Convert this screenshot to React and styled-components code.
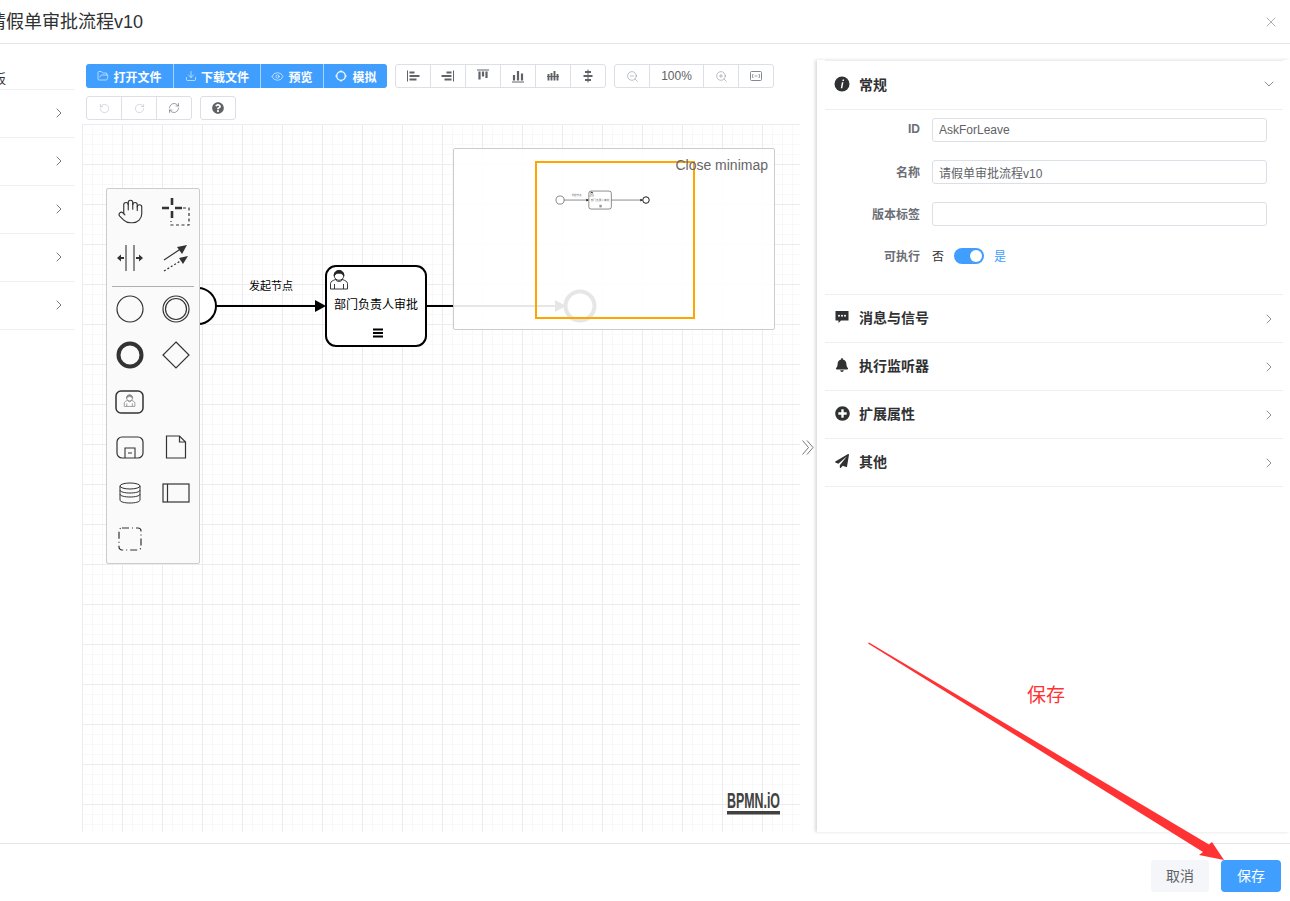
import React from 'react'
import styled, { createGlobalStyle } from 'styled-components'
import {
  X, ChevronRight, ChevronDown, FolderOpen, Download, Eye,
  RotateCcw, RotateCw, RefreshCw, ZoomIn, ZoomOut, Hand,
} from 'lucide-react'
import { FaBell, FaPlusCircle, FaPaperPlane, FaQuestionCircle } from 'react-icons/fa'

const GlobalStyle = createGlobalStyle`
  html, body {
    margin: 0;
    width: 1290px;
    height: 901px;
    overflow: hidden;
    background: #fff;
    font-family: "Liberation Sans", "Noto Sans CJK SC", sans-serif;
  }
  * { box-sizing: border-box; }
`

const Page = styled.div`
  position: relative;
  width: 1290px;
  height: 901px;
  overflow: hidden;
`
const Header = styled.header`
  height: 44px;
  display: flex;
  align-items: center;
  justify-content: space-between;
  padding-right: 11px;
  border-bottom: 1px solid #e4e4e9;
`
const Title = styled.h1`
  margin: 0 0 4px -12px;
  font-size: 18px;
  font-weight: 400;
  color: #303133;
`
const CloseIcon = styled(X)`
  color: #909399;
`
const Body = styled.div`
  height: 799px;
  display: flex;
  padding-bottom: 11px;
`
const LeftPanel = styled.aside`
  width: 74px;
  margin-right: 8px;
  padding-top: 25px;
  flex: none;
`
const LeftTitle = styled.div`
  height: 21px;
  margin-left: -20px;
  font-size: 13px;
  line-height: 19px;
  color: #303133;
  border-bottom: 1px solid #ebeef5;
  white-space: nowrap;
`
const LeftRow = styled.div`
  height: 48px;
  display: flex;
  align-items: center;
  justify-content: flex-end;
  padding: 0 7px 1px 0;
  color: #555;
  border-bottom: 1px solid #ebeef5;
`
const Main = styled.main`
  width: 718px;
  flex: none;
  display: flex;
  flex-direction: column;
  padding-top: 20px;
`
const ToolRow = styled.div`
  display: flex;
  gap: 8px;
  padding-left: 4px;
  margin-bottom: ${p => p.$gap}px;
`
const Group = styled.div`
  display: flex;
  height: 24px;
  border-radius: 3px;
  border: ${p => (p.$primary ? 'none' : '1px solid #dcdfe6')};
  background: ${p => (p.$primary ? '#409eff' : '#fff')};
  overflow: hidden;
`
const ToolButton = styled.div`
  width: ${p => p.$w}px;
  display: flex;
  align-items: center;
  justify-content: center;
  gap: 4px;
  font-size: 12px;
  color: ${p => (p.$primary ? '#fff' : p.$muted ? '#b4b7bd' : p.$soft ? '#858991' : '#606266')};
  border-left: 1px solid ${p => (p.$primary ? 'rgba(255,255,255,.55)' : '#dcdfe6')};
  &:first-child { border-left: none; }
`
const PrimaryLabel = styled.span`
  font-weight: 700;
`
const Canvas = styled.div`
  position: relative;
  flex: 1;
  overflow: hidden;
  background-color: #fff;
  background-image:
    linear-gradient(#ececef 1px, transparent 1px),
    linear-gradient(90deg, #ececef 1px, transparent 1px),
    linear-gradient(#f8f8f9 1px, transparent 1px),
    linear-gradient(90deg, #f8f8f9 1px, transparent 1px);
  background-size: 40px 40px, 40px 40px, 10px 10px, 10px 10px;
`
const DiagramLayer = styled.svg`
  position: absolute;
  left: 0;
  top: 0;
  width: 718px;
  height: 708px;
`
const Palette = styled.div`
  position: absolute;
  left: 24px;
  top: 64px;
  width: 94px;
  padding-bottom: 1px;
  background: #fafafa;
  border: 1px solid #ccc;
  border-radius: 2px;
  display: flex;
  flex-wrap: wrap;
`
const PaletteCell = styled.div`
  width: 46px;
  height: 46px;
  display: flex;
  align-items: center;
  justify-content: center;
  color: #333;
`
const HandIcon = styled(Hand)`
  margin-top: -2px;
`
const PaletteSeparator = styled.div`
  width: 82px;
  height: 1px;
  margin: 5px 5px -1px;
  background: #b0b0b0;
`
const Minimap = styled.div`
  position: absolute;
  left: 371px;
  top: 24px;
  width: 322px;
  height: 182px;
  background: rgba(255, 255, 255, .9);
  border: 1px solid #ccc;
  border-radius: 2px;
`
const MinimapLayer = styled.svg`
  position: absolute;
  left: 0;
  top: 0;
  width: 320px;
  height: 180px;
`
const MinimapToggle = styled.div`
  position: absolute;
  right: 6px;
  top: 8px;
  font-size: 14px;
  line-height: 17px;
  color: #666;
  white-space: nowrap;
`
const Logo = styled.svg`
  position: absolute;
  left: 644px;
  top: 666px;
  width: 56px;
  height: 26px;
  overflow: visible;
`
const Handle = styled.div`
  width: 17px;
  flex: none;
  display: flex;
  align-items: center;
  justify-content: center;
  padding: 19px 2px 0 0;
  color: #777;
`
const PropsPanel = styled.section`
  width: 473px;
  flex: none;
  margin-top: 16px;
  padding: 0 7px 0 8px;
  background: #fff;
  box-shadow: -2px 0 3px rgba(0, 0, 0, .14);
`
const SectionHead = styled.div`
  height: ${p => (p.$first ? 50 : 48)}px;
  display: flex;
  align-items: center;
  gap: 9px;
  padding: 0 8px 3px 9px;
  border-bottom: 1px solid #ebeef5;
  border-top: ${p => (p.$first ? '1px solid #ebeef5' : 'none')};
  color: #303133;
`
const IconSlot = styled.span`
  width: 16px;
  display: flex;
  justify-content: center;
`
const SectionTitle = styled.span`
  flex: 1;
  font-size: 14px;
  font-weight: 700;
`
const OpenChevron = styled(ChevronDown)`
  margin-right: -2px;
  color: #555;
`
const ClosedChevron = styled(ChevronRight)`
  margin: 3px -2px 0 0;
  color: #555;
`
const Form = styled.div`
  height: 185px;
  padding-top: 8px;
  border-bottom: 1px solid #ebeef5;
  display: flex;
  flex-direction: column;
  gap: 18px;
`
const FormRow = styled.div`
  height: 24px;
  display: flex;
  align-items: center;
`
const FormLabel = styled.label`
  width: 95px;
  margin: 0 12px 2px 0;
  text-align: right;
  font-size: 12px;
  font-weight: 700;
  color: #6b6e75;
`
const TextInput = styled.input`
  width: 335px;
  height: 24px;
  padding: 0 6px;
  border: 1px solid #dcdfe6;
  border-radius: 3px;
  outline: none;
  font-family: inherit;
  font-size: 12px;
  color: #606266;
`
const SwitchText = styled.span`
  margin-bottom: 2px;
  font-size: 12px;
  color: ${p => (p.$active ? '#409eff' : '#303133')};
`
const SwitchTrack = styled.span`
  position: relative;
  width: 30px;
  height: 16px;
  margin: 0 10px;
  border-radius: 8px;
  background: #409eff;
`
const SwitchKnob = styled.span`
  position: absolute;
  right: 2px;
  top: 2px;
  width: 12px;
  height: 12px;
  border-radius: 50%;
  background: #fff;
`
const Footer = styled.footer`
  height: 58px;
  border-top: 1px solid #e4e4e9;
  display: flex;
  justify-content: flex-end;
  gap: 12px;
  padding: 16px 9px 0 0;
`
const Button = styled.button`
  width: ${p => p.$w}px;
  height: 32px;
  border: none;
  border-radius: 4px;
  padding: 0 0 2px;
  font-family: inherit;
  font-size: 14px;
  color: ${p => (p.$primary ? '#fff' : '#606266')};
  background: ${p => (p.$primary ? '#409eff' : '#f4f6fa')};
`
const Annotation = styled.svg`
  position: absolute;
  left: 0;
  top: 0;
  width: 1290px;
  height: 901px;
  pointer-events: none;
`
const AnnotationText = styled.div`
  position: absolute;
  left: 1027px;
  top: 684px;
  font-size: 19px;
  line-height: 24px;
  color: #f33;
`

// small drawn icons, viewBox 14x14
const Ico = ({ size = 14, children, fill = 'none', stroke = 'currentColor', sw = 1 }) => (
  <svg width={size} height={size} viewBox="0 0 14 14" fill={fill} stroke={stroke} strokeWidth={sw}>
    {children}
  </svg>
)

const alignIcons = [
  <><path d="M1.500 1.500v11" /><path d="M3.500 3.500h5M3.500 7h10M3.500 10.500h7" strokeWidth="2" /></>,
  <><path d="M12.500 1.500v11" /><path d="M5.500 3.500h5M.5 7h10M3.500 10.500h7" strokeWidth="2" /></>,
  <><path d="M1 1h12" /><path d="M3.500 2.500v8M7 2.500v5M10.500 2.500v6.500" strokeWidth="2.200" /></>,
  <><path d="M1 13h12" /><path d="M3 6v5.500M7 2v9.500M11 4.500v7" strokeWidth="2.200" /></>,
  <><path d="M1 7.500h12" /><path d="M2.500 5v6.500M5.500 4v7.500M8.500 2v9.500M11.500 5v6.500" strokeWidth="1.900" /></>,
  <><path d="M7 .5v13" /><path d="M4 3h6M2.500 7h9M4 11h6" strokeWidth="2.200" /></>,
]

const FitIcon = () => (
  <Ico>
    <rect x="1.500" y="2.500" width="11" height="9" rx="1" />
    <path d="M4.500 5.500h-1v3h1M9.500 5.500h1v3h-1M5.500 7h3" strokeWidth=".8" />
  </Ico>
)

const SimulateIcon = () => (
  <Ico sw={1.300}>
    <circle cx="7" cy="7" r="4.300" />
    <path d="M7 1v1M7 12v1M1 7h1M12 7h1" strokeWidth=".8" />
  </Ico>
)

const InfoIcon = () => (
  <svg width="16" height="16" viewBox="0 0 16 16">
    <circle cx="8" cy="8" r="7.500" fill="#303133" />
    <path d="M8.700 3.400h1.500l-.4 1.600H8.300zM7.900 6.300h1.500L8.300 12.300H6.800z" fill="#fff" />
  </svg>
)

const CommentIcon = () => (
  <svg width="14" height="14" viewBox="0 0 14 14">
    <path d="M0.500 1h13v9.500H6L3.500 13v-2.500h-3z" fill="#303133" />
    <circle cx="4" cy="5.700" r="1" fill="#fff" />
    <circle cx="7" cy="5.700" r="1" fill="#fff" />
    <circle cx="10" cy="5.700" r="1" fill="#fff" />
  </svg>
)

const CollapseIcon = () => (
  <svg width="12" height="15" viewBox="0 0 12 15" fill="none" stroke="currentColor" strokeWidth="1">
    <path d="M.5.5l6 7-6 7M5 .5l6 7-6 7" />
  </svg>
)

const UserTaskGlyph = ({ x, y, s = 1, sw = .9, color = '#222' }) => (
  <g transform={`translate(${x} ${y}) scale(${s})`} fill="none" stroke={color} strokeWidth={sw}>
    <path d="M.5 20v-5.500c0-2 2.500-3 5-4h7c2.500 1 5 2 5 4V20z" fill="#fff" />
    <path d="M4.500 15v5M13.500 15v5" />
    <path d="M5.500 10.500c1 2.500 6 2.500 7 0" />
    <circle cx="9" cy="6.500" r="4.800" fill="#fff" />
    <path d="M4.200 7C3.500-.5 14.500-.5 13.800 7c-1.500-2.500-3-2.800-4.800-2.800S5.700 4.500 4.200 7z" fill={color} />
  </g>
)

const Diagram = () => (
  <g fill="none" stroke="#000" strokeWidth="2">
    <circle cx="198" cy="306" r="18" fill="#fff" />
    <path d="M216 306h100" />
    <path d="M315 300l11 6-11 6z" fill="#000" stroke="none" />
    <rect x="326" y="266" width="100" height="80" rx="10" fill="#fff" />
    <UserTaskGlyph x="330" y="269" />
    <path d="M373 329.500h10M373 333h10M373 336.500h10" strokeWidth="1.800" />
    <path d="M427 306h128" />
    <path d="M555 300l11 6-11 6z" fill="#000" stroke="none" />
    <circle cx="580" cy="306" r="14.500" strokeWidth="4" fill="#fff" />
  </g>
)

const DiagramLabels = ({ opacity = 1 }) => (
  <g fill="#000" fontSize="11" textAnchor="middle" opacity={opacity}>
    <text x="271" y="290">发起节点</text>
    <text x="376" y="309" fontSize="12">部门负责人审批</text>
  </g>
)

const paletteItems = [
  <HandIcon size={27} strokeWidth={1} />,
  <svg width="28" height="28" viewBox="0 0 28 28" fill="none" stroke="#333">
    <path d="M10 0v7M10 13v7M0 10h7M13 10h7" strokeWidth="2.600" />
    <path d="M21 10h6v17H9v-4" strokeDasharray="3 2.500" strokeWidth="1.200" />
  </svg>,
  <svg width="28" height="28" viewBox="0 0 28 28" fill="none" stroke="#333">
    <path d="M10 1v26M18 1v26" strokeWidth="1.100" />
    <path d="M1 14l4-3.500V13h3v2H5v2.500zM27 14l-4-3.500V13h-3v2h3v2.500z" fill="#333" stroke="none" />
  </svg>,
  <svg width="28" height="28" viewBox="0 0 28 28" fill="none" stroke="#333">
    <path d="M2 16L20 4" strokeWidth="1.200" />
    <path d="M15 3l10-2-5 9z" fill="#333" stroke="none" />
    <path d="M2 27l18-11" strokeWidth="1.200" strokeDasharray="2 2" />
    <path d="M17 14l9-2-5 8z" fill="#333" stroke="none" />
  </svg>,
  <svg width="28" height="28" viewBox="0 0 28 28" fill="none" stroke="#333">
    <circle cx="14" cy="14" r="13" strokeWidth="1.200" />
  </svg>,
  <svg width="28" height="28" viewBox="0 0 28 28" fill="none" stroke="#333">
    <circle cx="14" cy="14" r="13" strokeWidth="1.200" />
    <circle cx="14" cy="14" r="10.500" strokeWidth="1.200" />
  </svg>,
  <svg width="28" height="28" viewBox="0 0 28 28" fill="none" stroke="#333">
    <circle cx="14" cy="14" r="11.500" strokeWidth="4" />
  </svg>,
  <svg width="28" height="28" viewBox="0 0 28 28" fill="none" stroke="#333">
    <path d="M14 1l13 13-13 13L1 14z" strokeWidth="1.200" />
  </svg>,
  <svg width="30" height="26" viewBox="0 0 30 26" fill="none" stroke="#333">
    <rect x="1" y="3" width="27" height="22" rx="5" strokeWidth="1.500" />
    <UserTaskGlyph x="9" y="6" s={.62} sw={1.300} color="#888" />
  </svg>,
  null,
  <svg width="28" height="24" viewBox="0 0 28 24" fill="none" stroke="#333">
    <rect x="1" y="2" width="26" height="21" rx="5" strokeWidth="1.200" />
    <path d="M9 23V13h10v10M12 18h4" strokeWidth="1.100" />
  </svg>,
  <svg width="22" height="24" viewBox="0 0 22 24" fill="none" stroke="#333" strokeWidth="1.200">
    <path d="M1.500 1h13l6 6v16h-19z" />
    <path d="M14.500 1v6h6" />
  </svg>,
  <svg width="24" height="24" viewBox="0 0 24 24" fill="none" stroke="#333" strokeWidth="1">
    <ellipse cx="12" cy="5" rx="10" ry="3" />
    <path d="M2 5v14c0 2 5 3 10 3s10-1 10-3V5M2 9c0 2 5 3 10 3s10-1 10-3M2 13c0 2 5 3 10 3s10-1 10-3" />
  </svg>,
  <svg width="28" height="20" viewBox="0 0 28 20" fill="none" stroke="#333" strokeWidth="1.200">
    <rect x="1" y="1" width="26" height="18" />
    <path d="M5.500 1v18" />
  </svg>,
  <svg width="26" height="26" viewBox="0 0 26 26" fill="none" stroke="#333" strokeWidth="1.200">
    <rect x="2" y="2" width="22" height="22" rx="3" strokeDasharray="7 3 1 3" />
  </svg>,
  null,
]

const collapsed = [
  { title: '消息与信号', icon: <CommentIcon /> },
  { title: '执行监听器', icon: <FaBell size={14} /> },
  { title: '扩展属性', icon: <FaPlusCircle size={15} /> },
  { title: '其他', icon: <FaPaperPlane size={14} /> },
]

const fields = [
  { label: 'ID', value: 'AskForLeave' },
  { label: '名称', value: '请假单审批流程v10' },
  { label: '版本标签', value: '' },
]

export default function App() {
  return (
    <Page>
      <GlobalStyle />
      <Header>
        <Title>请假单审批流程v10</Title>
        <CloseIcon size={16} strokeWidth={1.100} />
      </Header>
      <Body>
        <LeftPanel>
          <LeftTitle>面板</LeftTitle>
          {[0, 1, 2, 3, 4].map(i => (
            <LeftRow key={i}>
              <ChevronRight size={16} strokeWidth={1.200} />
            </LeftRow>
          ))}
        </LeftPanel>
        <Main>
          <ToolRow $gap={8}>
            <Group $primary>
              <ToolButton $primary $w={87}><FolderOpen size={12} strokeWidth={1.200} /><PrimaryLabel>打开文件</PrimaryLabel></ToolButton>
              <ToolButton $primary $w={87}><Download size={12} strokeWidth={1.200} /><PrimaryLabel>下载文件</PrimaryLabel></ToolButton>
              <ToolButton $primary $w={63}><Eye size={13} strokeWidth={1.200} /><PrimaryLabel>预览</PrimaryLabel></ToolButton>
              <ToolButton $primary $w={64}><SimulateIcon /><PrimaryLabel>模拟</PrimaryLabel></ToolButton>
            </Group>
            <Group>
              {alignIcons.map((icon, i) => (
                <ToolButton key={i} $w={i === 0 ? 34 : 35}><Ico size={14}>{icon}</Ico></ToolButton>
              ))}
            </Group>
            <Group>
              <ToolButton $soft $w={34}><ZoomOut size={13} strokeWidth={1} /></ToolButton>
              <ToolButton $w={54}>100%</ToolButton>
              <ToolButton $soft $w={35}><ZoomIn size={13} strokeWidth={1} /></ToolButton>
              <ToolButton $soft $w={35}><FitIcon /></ToolButton>
            </Group>
          </ToolRow>
          <ToolRow $gap={4}>
            <Group>
              <ToolButton $muted $w={34}><RotateCcw size={11} strokeWidth={1.100} /></ToolButton>
              <ToolButton $muted $w={35}><RotateCw size={11} strokeWidth={1.100} /></ToolButton>
              <ToolButton $w={35}><RefreshCw size={12} strokeWidth={1.200} /></ToolButton>
            </Group>
            <Group>
              <ToolButton $w={34}><FaQuestionCircle size={12} /></ToolButton>
            </Group>
          </ToolRow>
          <Canvas>
            <DiagramLayer viewBox="82 124 718 708">
              <Diagram />
              <DiagramLabels />
            </DiagramLayer>
            <Minimap>
              <MinimapLayer viewBox="454 149 320 180">
                <g transform="translate(515.500 131.200) scale(.225)">
                  <Diagram />
                  <DiagramLabels opacity={.6} />
                </g>
                <rect x="536" y="162" width="158" height="156" fill="none" stroke="#ffa500" strokeWidth="2" />
              </MinimapLayer>
              <MinimapToggle>Close minimap</MinimapToggle>
            </Minimap>
            <Palette>
              {paletteItems.slice(0, 4).map((item, i) => <PaletteCell key={i}>{item}</PaletteCell>)}
              <PaletteSeparator />
              {paletteItems.slice(4).map((item, i) => <PaletteCell key={i}>{item}</PaletteCell>)}
            </Palette>
            <Logo viewBox="0 0 56 26">
              <text x="1" y="18" fontSize="22" fontWeight="700" fill="#414141" textLength="53" lengthAdjust="spacingAndGlyphs">BPMN.iO</text>
              <rect x="1" y="21" width="53" height="3.500" fill="#414141" />
            </Logo>
          </Canvas>
        </Main>
        <Handle><CollapseIcon /></Handle>
        <PropsPanel>
          <SectionHead $first>
            <IconSlot><InfoIcon /></IconSlot>
            <SectionTitle>常规</SectionTitle>
            <OpenChevron size={16} strokeWidth={1} />
          </SectionHead>
          <Form>
            {fields.map(f => (
              <FormRow key={f.label}>
                <FormLabel>{f.label}</FormLabel>
                <TextInput readOnly value={f.value} />
              </FormRow>
            ))}
            <FormRow>
              <FormLabel>可执行</FormLabel>
              <SwitchText>否</SwitchText>
              <SwitchTrack><SwitchKnob /></SwitchTrack>
              <SwitchText $active>是</SwitchText>
            </FormRow>
          </Form>
          {collapsed.map(s => (
            <SectionHead key={s.title}>
              <IconSlot>{s.icon}</IconSlot>
              <SectionTitle>{s.title}</SectionTitle>
              <ClosedChevron size={16} strokeWidth={1} />
            </SectionHead>
          ))}
        </PropsPanel>
      </Body>
      <Footer>
        <Button $w={58}>取消</Button>
        <Button $primary $w={60}>保存</Button>
      </Footer>
      <Annotation viewBox="0 0 1290 901">
        <path d="M868 643.500L869 642.500L1209 844.500L1212 842L1224 860L1199 855L1203 852z" fill="#f33" />
      </Annotation>
      <AnnotationText>保存</AnnotationText>
    </Page>
  )
}
